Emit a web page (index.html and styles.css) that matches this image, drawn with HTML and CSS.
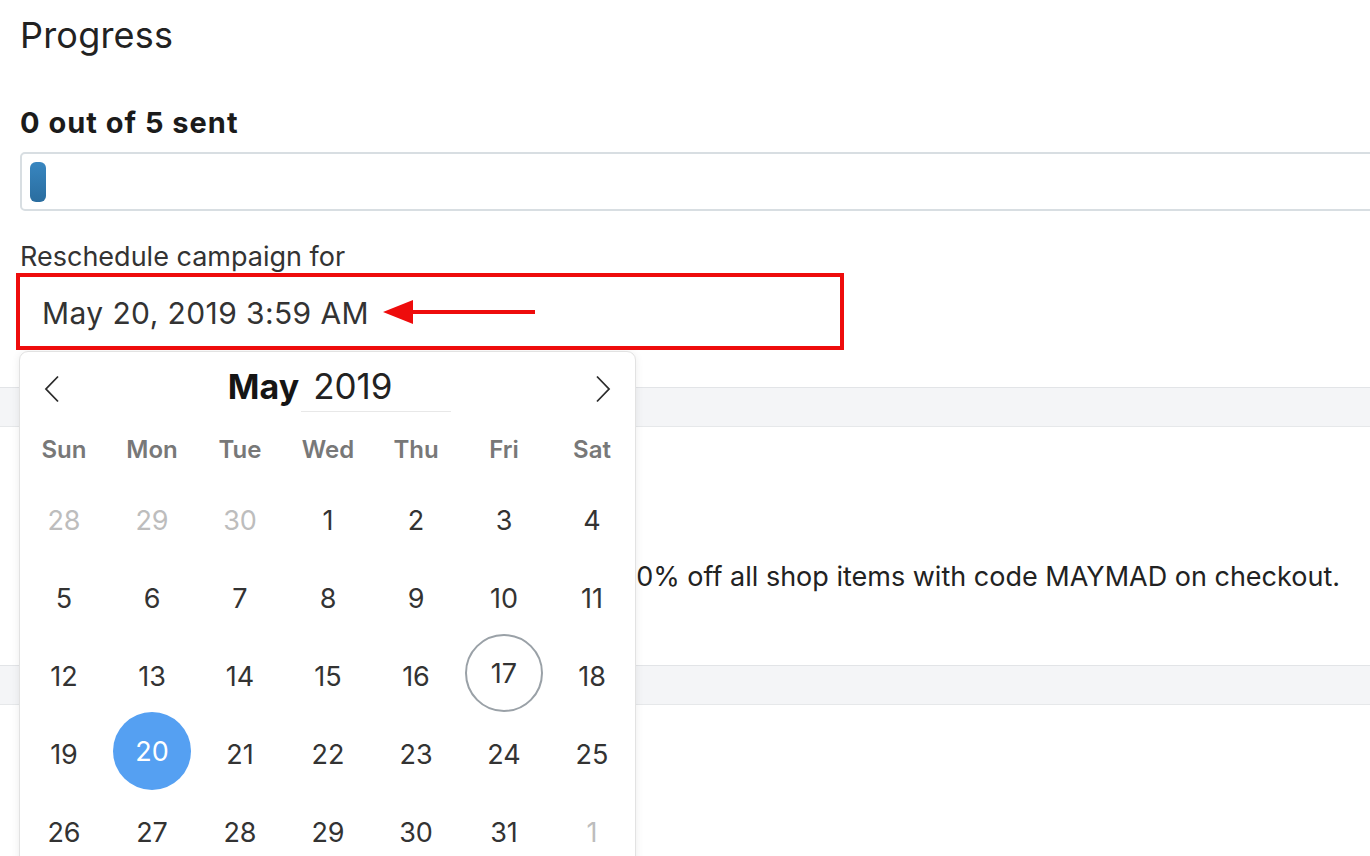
FILE: index.html
```html
<!DOCTYPE html>
<html lang="en">
<head>
    <meta charset="UTF-8">
    <meta name="viewport" content="width=device-width, initial-scale=1.0">
    <title>Campaign Progress</title>
    <link rel="stylesheet" href="styles.css">
</head>
<body>
    <div class="page">
        <h2 class="title">Progress</h2>
        <div class="sent-count">0 out of 5 sent</div>
        <div class="progress">
            <div class="progress-bar" style="width: 16px;"></div>
        </div>
        <div class="field-label">Reschedule campaign for</div>
        <div class="field-wrap">
            <div class="date-field">
                <span class="date-value">May 20, 2019 3:59 AM</span>
                <svg class="annot-arrow" width="152" height="26" viewBox="0 0 152 26">
                    <polygon points="0,13 30,1 30,25" fill="#ee0c0c"/>
                    <rect x="26" y="11" width="126" height="4" fill="#ee0c0c"/>
                </svg>
            </div>
            <div class="calendar">
                <div class="cal-head">
                    <button class="cal-nav">
                        <svg width="16" height="28" viewBox="0 0 16 28"><polyline points="14,1.5 2,14 14,26.5" fill="none" stroke="#2b2b2b" stroke-width="1.8"/></svg>
                    </button>
                    <div class="cal-title">
                        <span class="cal-month">May</span>
                        <span class="cal-year">2019</span>
                    </div>
                    <button class="cal-nav">
                        <svg width="16" height="28" viewBox="0 0 16 28"><polyline points="2,1.5 14,14 2,26.5" fill="none" stroke="#2b2b2b" stroke-width="1.8"/></svg>
                    </button>
                </div>
                <div class="cal-weekdays">
                    <span>Sun</span><span>Mon</span><span>Tue</span><span>Wed</span><span>Thu</span><span>Fri</span><span>Sat</span>
                </div>
                <div class="cal-days">
                    <span class="day other">28</span><span class="day other">29</span><span class="day other">30</span><span class="day">1</span><span class="day">2</span><span class="day">3</span><span class="day">4</span>
                    <span class="day">5</span><span class="day">6</span><span class="day">7</span><span class="day">8</span><span class="day">9</span><span class="day">10</span><span class="day">11</span>
                    <span class="day">12</span><span class="day">13</span><span class="day">14</span><span class="day">15</span><span class="day">16</span><span class="day today">17</span><span class="day">18</span>
                    <span class="day">19</span><span class="day selected">20</span><span class="day">21</span><span class="day">22</span><span class="day">23</span><span class="day">24</span><span class="day">25</span>
                    <span class="day">26</span><span class="day">27</span><span class="day">28</span><span class="day">29</span><span class="day">30</span><span class="day">31</span><span class="day other">1</span>
                </div>
            </div>
        </div>
    </div>
    <div class="band"></div>
    <div class="summary">
        <div class="summary-label">Preview text</div>
        <div class="summary-text">Get 20% off all shop items with code MAYMAD on checkout.</div>
    </div>
    <div class="band"></div>
    <div class="summary"></div>
</body>
</html>
```

FILE: styles.css
```css
html, body {
    height: 100%;
    overflow: hidden;
}
body {
    margin: 0;
    background: #ffffff;
    color: #222222;
    font-family: Inter, "Noto Sans", sans-serif;
}
.page {
    padding: 0 20px 37px 20px;
}
.title {
    margin: 14px 0 0 0;
    font-size: 36px;
    line-height: 42px;
    font-weight: 400;
    letter-spacing: 0.2px;
    color: #222222;
}
.sent-count {
    margin-top: 50px;
    font-size: 29px;
    line-height: 34px;
    font-weight: 700;
    letter-spacing: 1px;
    color: #1b1b1b;
}
.progress {
    margin-top: 12px;
    margin-right: -40px;
    height: 59px;
    box-sizing: border-box;
    border: 2px solid #d8dee2;
    border-radius: 5px;
    padding: 8px;
}
.progress-bar {
    height: 40px;
    border-radius: 6px;
    background: linear-gradient(to bottom, #3886c0, #2a6d9f);
}
.field-label {
    margin-top: 30px;
    font-size: 27px;
    line-height: 32px;
    color: #333333;
}
.field-wrap {
    position: relative;
}
.date-field {
    position: relative;
    z-index: 2;
    margin-left: -4px;
    width: 828px;
    height: 77px;
    box-sizing: border-box;
    border: 4px solid #ee0c0c;
    padding-left: 22px;
    display: flex;
    align-items: center;
}
.date-value {
    font-size: 30px;
    letter-spacing: 0.4px;
    color: #333333;
    padding-top: 2px;
}
.annot-arrow {
    margin-left: 14px;
}
.calendar {
    position: absolute;
    z-index: 1;
    top: 78px;
    left: -1px;
    width: 617px;
    height: 560px;
    box-sizing: border-box;
    background: #ffffff;
    border: 1px solid #e2e2e2;
    border-radius: 9px;
    box-shadow: 0 1px 8px rgba(0, 0, 0, 0.08);
}
.cal-head {
    height: 73px;
    display: flex;
    align-items: center;
}
.cal-nav {
    width: 64px;
    height: 60px;
    border: none;
    background: none;
    padding: 0;
    display: flex;
    align-items: center;
    justify-content: center;
}
.cal-title {
    flex: 1;
    display: flex;
    justify-content: center;
    align-items: baseline;
    padding-left: 24px;
}
.cal-month {
    font-size: 34px;
    font-weight: 700;
    color: #151515;
}
.cal-year {
    width: 138px;
    margin-left: 2px;
    padding-left: 12px;
    padding-bottom: 4px;
    font-size: 35px;
    color: #222222;
    border-bottom: 1px solid #e8e8e8;
}
.cal-weekdays {
    display: grid;
    grid-template-columns: repeat(7, 88px);
    height: 48px;
    align-items: center;
    text-align: center;
    font-size: 24px;
    font-weight: 600;
    color: #787878;
}
.cal-days {
    margin-top: 8px;
    display: grid;
    grid-template-columns: repeat(7, 88px);
    grid-auto-rows: 78px;
}
.day {
    display: flex;
    align-items: center;
    justify-content: center;
    font-size: 27px;
    color: #333333;
}
.day.other {
    color: #bdbdbd;
}
.day.today,
.day.selected {
    width: 78px;
    height: 78px;
    box-sizing: border-box;
    justify-self: center;
    border-radius: 50%;
}
.day.today {
    border: 2px solid #9aa1a7;
    margin-top: -3px;
}
.day.selected {
    background: #55a0f2;
    color: #ffffff;
    margin-top: -3px;
}
.band {
    height: 38px;
    background: #f4f5f7;
    border-top: 1px solid #e2e4e7;
    border-bottom: 1px solid #e6e8ea;
}
.summary {
    height: 238px;
    box-sizing: border-box;
    padding: 40px 30px 72px 20px;
    display: flex;
    flex-direction: column;
    justify-content: space-between;
}
.summary-label {
    font-size: 26px;
    line-height: 32px;
    color: #333333;
}
.summary-text {
    text-align: right;
    font-size: 27px;
    line-height: 32px;
    color: #222222;
}
```
